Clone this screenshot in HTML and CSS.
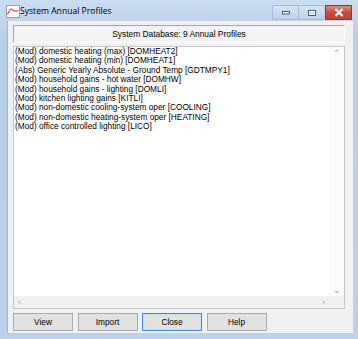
FILE: index.html
```html
<!DOCTYPE html>
<html lang="en">
<head>
    <meta charset="UTF-8">
    <title>System Annual Profiles</title>
    <link rel="stylesheet" href="styles.css">
</head>
<body>
    <div class="window">
        <div class="titlebar">
            <svg class="app-icon" width="14" height="13" viewBox="0 0 14 13">
                <rect x="0.5" y="0.5" width="13" height="12" fill="#fff" stroke="#9a9a9a"/>
                <path d="M1.5 9.5 C3 6, 3.8 4, 5.3 4 C6.8 4, 7.3 6.2, 9 6.2 L12.5 5.8" fill="none" stroke="#e8473f" stroke-width="1.2"/>
            </svg>
            <span class="title">System Annual Profiles</span>
            <div class="caption-buttons">
                <div class="cap-btn">
                    <svg width="10" height="4" viewBox="0 0 10 4"><rect x="1.5" y="0.5" width="7" height="2.5" fill="#fff" stroke="#4a5c70"/></svg>
                </div>
                <div class="cap-btn">
                    <svg width="10" height="8" viewBox="0 0 10 8"><rect x="1.5" y="1.5" width="7" height="5" fill="none" stroke="#4a5c70"/><rect x="2.5" y="2.5" width="5" height="3" fill="none" stroke="#fff"/></svg>
                </div>
                <div class="cap-btn close">
                    <svg width="10" height="9" viewBox="0 0 10 9"><path d="M1.5 1 L8.5 8 M8.5 1 L1.5 8" stroke="#fff" stroke-width="2.2"/></svg>
                </div>
            </div>
        </div>

        <div class="client">
            <div class="db-header">System Database: 9 Annual Profiles</div>

            <div class="listbox">
                <div class="items">
                    <div>(Mod) domestic heating (max) [DOMHEAT2]</div>
                    <div>(Mod) domestic heating (min) [DOMHEAT1]</div>
                    <div>(Abs) Generic Yearly Absolute - Ground Temp [GDTMPY1]</div>
                    <div>(Mod) household gains - hot water [DOMHW]</div>
                    <div>(Mod) household gains - lighting [DOMLI]</div>
                    <div>(Mod) kitchen lighting gains [KITLI]</div>
                    <div>(Mod) non-domestic cooling-system oper [COOLING]</div>
                    <div>(Mod) non-domestic heating-system oper [HEATING]</div>
                    <div>(Mod) office controlled lighting [LICO]</div>
                </div>
                <div class="vscroll">
                    <span class="arrow">&#8963;</span>
                    <span class="arrow">&#8964;</span>
                </div>
                <div class="hscroll">
                    <span class="arrow">&#8249;</span>
                    <span class="arrow">&#8250;</span>
                </div>
                <div class="corner"></div>
            </div>

            <div class="buttons">
                <button>View</button>
                <button>Import</button>
                <button class="default">Close</button>
                <button>Help</button>
            </div>
        </div>
    </div>
</body>
</html>
```

FILE: styles.css
```css
html, body { margin: 0; padding: 0; }
body { font-family: "Liberation Sans", Arial, sans-serif; font-size: 8.3px; color: #000; }

.window {
    width: 358px; height: 339px; box-sizing: border-box;
    background: linear-gradient(#c9dcf0, #b8cfe8 40px, #bcd2ea);
    padding: 0 5px 6px 7px;
    display: flex; flex-direction: column;
}

.titlebar { height: 21px; display: flex; align-items: flex-start; }
.app-icon { margin: 5px 0 0 -1px; }
.title { font-family: "Open Sans", sans-serif; font-size: 8.6px; margin: 5px 0 0 0; color: #000; }
.caption-buttons { margin-left: auto; margin-right: 1px; margin-top: 5px; display: flex; }
.cap-btn {
    width: 26px; height: 15px; box-sizing: border-box;
    border: 1px solid #a9bdd2; border-right: none;
    background: linear-gradient(#d4e3f3, #bfd2e8);
    display: flex; align-items: center; justify-content: center;
}
.cap-btn.close {
    width: 27px; border: 1px solid #8a3a30; margin-left: 1px;
    background: linear-gradient(#e08b7e, #c94a38 50%, #c2412f);
}

.client {
    flex: 1; background: #f0f0f0;
    border-left: 1px solid #9fb3c9;
    padding: 4px 8px 2px 5px;
    display: flex; flex-direction: column;
}

.db-header {
    height: 18px; box-sizing: border-box;
    border: 1px solid #fff; border-top-color: #a5a5a5; border-left-color: #a5a5a5;
    background: #f3f3f3;
    text-align: center; line-height: 16px; font-size: 8.4px;
}

.listbox {
    margin-top: 3px; flex: 1;
    border: 1px solid #c6c6c6; background: #fff;
    display: grid; grid-template-columns: 1fr 15px; grid-template-rows: 1fr 12px;
}
.items { padding: 0 0 0 1px; line-height: 9.4px; }
.vscroll {
    background: #fbfbfb;
    display: flex; flex-direction: column; justify-content: space-between; align-items: center;
}
.hscroll {
    background: #f0f0f0;
    display: flex; justify-content: space-between; align-items: center; padding: 0 4px;
}
.arrow { color: #a6a6a6; font-size: 9px; line-height: 12px; }
.corner { background: #f0f0f0; }

.buttons { margin-top: 4px; display: flex; gap: 4.5px; }
.buttons button {
    width: 60px; height: 18px; margin: 0; padding: 0;
    font-family: "Liberation Sans", Arial, sans-serif; font-size: 8.3px; color: #000;
    background: #e1e1e1; border: 1px solid #adadad;
}
.buttons button.default { border: 1px solid #3c8be0; box-shadow: inset 0 0 0 1px #cce0f7; }
```
